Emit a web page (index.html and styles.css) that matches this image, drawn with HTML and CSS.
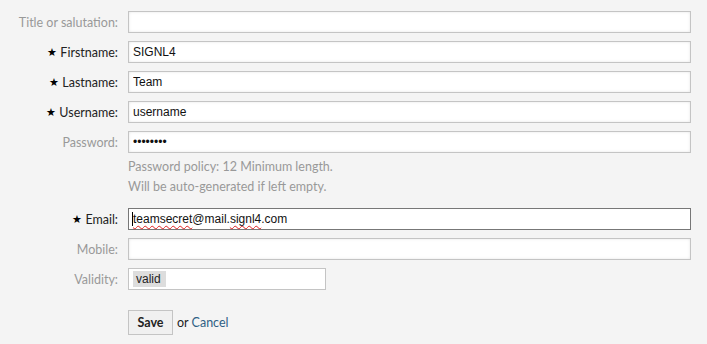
FILE: index.html
```html
<!DOCTYPE html>
<html>
  <head>
    <title>Add Agent</title>
    <link rel="stylesheet" href="styles.css">
  </head>
  <body>
    <form class="agent-form">
      <div class="field">
        <label class="label">Title or salutation:</label>
        <input type="text" class="input" value="" />
      </div>
      <div class="field">
        <label class="label required"><span class="star">&#9733;</span> Firstname:</label>
        <input type="text" class="input" value="SIGNL4" />
      </div>
      <div class="field">
        <label class="label required"><span class="star">&#9733;</span> Lastname:</label>
        <input type="text" class="input" value="Team" />
      </div>
      <div class="field">
        <label class="label required"><span class="star">&#9733;</span> Username:</label>
        <input type="text" class="input" value="username" />
      </div>
      <div class="field">
        <label class="label">Password:</label>
        <input type="password" class="input" value="password" />
      </div>
      <div class="field hint-row">
        <span></span>
        <div class="hint">
          <p>Password policy: 12 Minimum length.</p>
          <p>Will be auto-generated if left empty.</p>
        </div>
      </div>
      <div class="field">
        <label class="label required"><span class="star">&#9733;</span> Email:</label>
        <div class="input focused"><span class="caret"></span><span class="misspelled">teamsecret</span>@mail.<span class="misspelled">signl4</span>.com</div>
      </div>
      <div class="field">
        <label class="label">Mobile:</label>
        <input type="text" class="input" value="" />
      </div>
      <div class="field">
        <label class="label">Validity:</label>
        <div class="select"><span class="chip">valid</span></div>
      </div>
      <div class="field actions">
        <span></span>
        <div class="buttons">
          <button type="button" class="save-btn">Save</button>
          <span class="or">or <a href="#" class="cancel">Cancel</a></span>
        </div>
      </div>
    </form>
  </body>
</html>
```

FILE: styles.css
```css
body {
  margin: 0;
  background: #f4f4f4;
  font-family: "Lato", "Open Sans", sans-serif;
  font-size: 12px;
  color: #333;
}
.agent-form {
  display: flex;
  flex-direction: column;
  gap: 8px;
  padding: 11px 16px 0 0;
}
.field {
  display: grid;
  grid-template-columns: 118px 1fr;
  column-gap: 10px;
  align-items: center;
}
.label {
  text-align: right;
  color: #999;
  font-size: 12.5px;
}
.label.required {
  color: #222;
}
.star {
  font-size: 10.5px;
  color: #000;
  position: relative;
  top: -1px;
}
.input {
  height: 22px;
  box-sizing: border-box;
  border: 1px solid #c4c4c4;
  box-shadow: inset 0 0 3px #e4e4e4;
  background: #fff;
  padding: 0 4px;
  font-family: "Liberation Sans", Arial, sans-serif;
  font-size: 12px;
  color: #111;
  outline: none;
}
.input.focused {
  border-color: #777;
  box-shadow: none;
  display: flex;
  align-items: center;
  padding-left: 3px;
  white-space: pre;
}
.caret {
  width: 1px;
  height: 14px;
  background: #000;
}
.misspelled {
  text-decoration: underline wavy #e02020;
  text-decoration-thickness: 1px;
  text-underline-offset: 2px;
}
.hint-row {
  margin: -4px 0 3px;
}
.hint p {
  margin: 0;
  line-height: 20px;
  color: #999;
  font-size: 12.5px;
}
.select {
  width: 198px;
  height: 22px;
  box-sizing: border-box;
  border: 1px solid #c4c4c4;
  background: #fff;
  display: flex;
  align-items: center;
  padding-left: 4px;
}
.chip {
  background: #ddd;
  padding: 1px 5px 1px 3px;
  font-family: "Liberation Sans", Arial, sans-serif;
  font-size: 12px;
  color: #222;
}
.actions {
  margin-top: 12px;
}
.buttons {
  display: flex;
  align-items: center;
  gap: 4px;
}
.save-btn {
  width: 45px;
  height: 25px;
  border: 1px solid #c4c4c4;
  background: #f0f0f0;
  font-family: "Lato", "Open Sans", sans-serif;
  font-weight: bold;
  font-size: 12.5px;
  color: #222;
  padding: 0;
}
.or {
  font-size: 12.5px;
  color: #222;
}
.cancel {
  color: #2f5f85;
  text-decoration: none;
}
```
